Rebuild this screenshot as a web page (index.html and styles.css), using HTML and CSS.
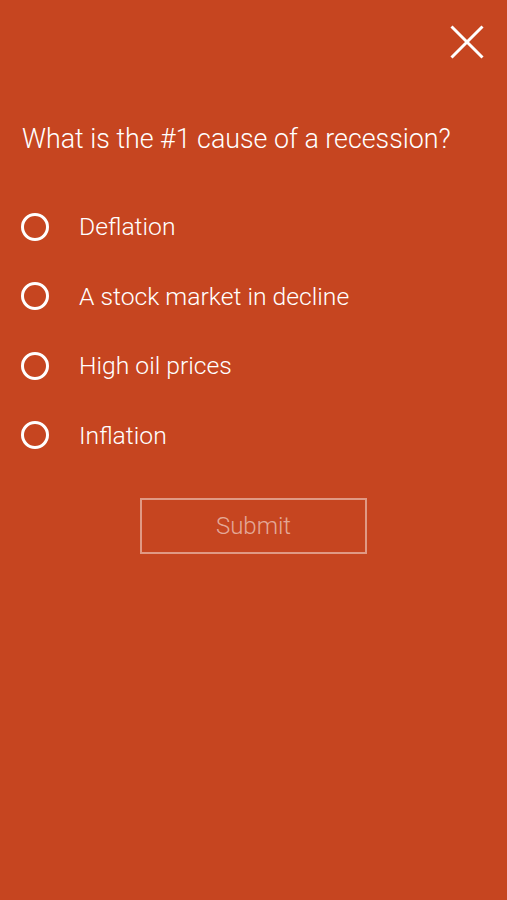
FILE: index.html
```html
<!DOCTYPE html>
<html lang="en">

<head>
  <meta charset="UTF-8">
  <meta name="viewport" content="width=device-width, initial-scale=1.0">
  <title>Quiz</title>
  <link rel="stylesheet" href="styles.css">
</head>

<body>
  <div class="topbar">
    <button class="close" aria-label="Close">
      <svg width="34" height="34" viewBox="0 0 34 34">
        <path d="M1.5 1.5 L32.5 32.5 M32.5 1.5 L1.5 32.5" stroke="#fff" stroke-width="3" fill="none" />
      </svg>
    </button>
  </div>

  <h1 class="question">What is the #1 cause of a recession?</h1>

  <!-- Answer options -->
  <form class="quiz">
    <label class="option"><input type="radio" name="answer"><span class="dot"></span>Deflation</label>
    <label class="option"><input type="radio" name="answer"><span class="dot"></span>A stock market in decline</label>
    <label class="option"><input type="radio" name="answer"><span class="dot"></span>High oil prices</label>
    <label class="option"><input type="radio" name="answer"><span class="dot"></span>Inflation</label>

    <button type="submit" class="submit" disabled>Submit</button>
  </form>
</body>

</html>
```

FILE: styles.css
```css
body {
  margin: 0;
  min-height: 900px;
  background-color: #c64520;
  color: #fff;
  font-family: Roboto, "DejaVu Sans", sans-serif;
  font-weight: 300;
}

.topbar {
  display: flex;
  justify-content: flex-end;
  padding: 25px 23px 0 0;
}

.close {
  background: none;
  border: none;
  padding: 0;
  width: 34px;
  height: 34px;
  cursor: pointer;
}

.question {
  margin: 64px 0 0 22px;
  font-size: 26.8px;
  font-weight: 300;
  line-height: 32px;
}

.quiz {
  margin-top: 37px;
  display: flex;
  flex-direction: column;
}

.option {
  display: flex;
  align-items: center;
  height: 69.5px;
  padding-left: 21px;
  font-size: 24.7px;
  cursor: pointer;
}

.option input {
  display: none;
}

.dot {
  width: 22px;
  height: 22px;
  border: 3px solid #fff;
  border-radius: 50%;
  margin-right: 30px;
}

.option input:checked + .dot {
  background-color: #fff;
}

.submit {
  align-self: center;
  margin-top: 28px;
  width: 227px;
  height: 56px;
  background: none;
  border: 2px solid rgba(255, 255, 255, 0.45);
  color: rgba(255, 255, 255, 0.55);
  font-family: inherit;
  font-weight: 300;
  font-size: 24px;
}
```
